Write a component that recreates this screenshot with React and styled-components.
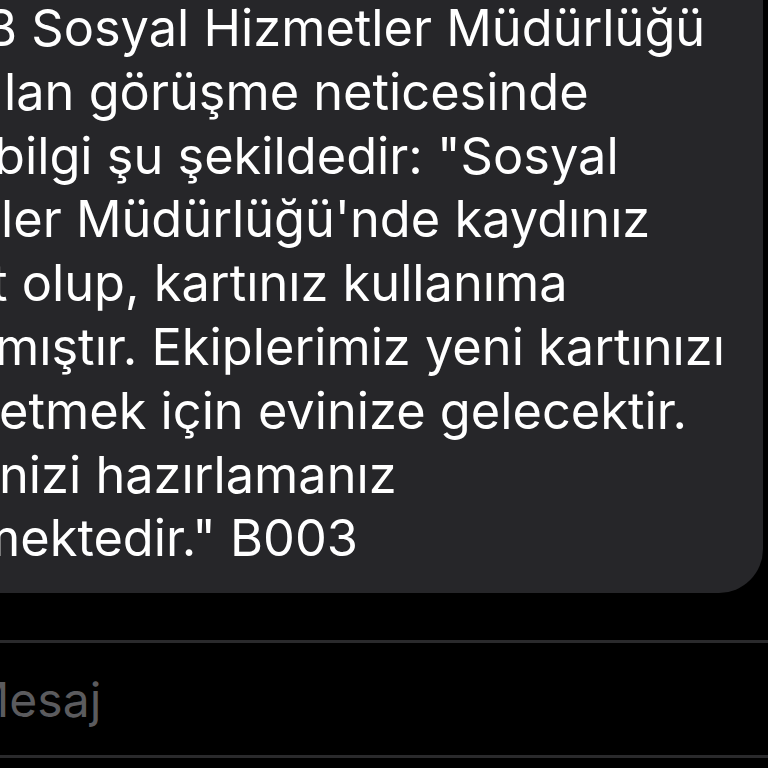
import React from "react";
import styled, { createGlobalStyle } from "styled-components";

const GlobalStyle = createGlobalStyle`
  html, body {
    margin: 0;
    padding: 0;
    background: #000;
    overflow: hidden;
  }
  #root {
    width: 768px;
    height: 768px;
    overflow: hidden;
  }
`;

const Screen = styled.div`
  width: 768px;
  height: 768px;
  display: flex;
  flex-direction: column;
  background: #000;
  font-family: Inter, "Noto Sans", sans-serif;
  overflow: hidden;
`;

const Bubble = styled.div`
  width: 763px;
  height: 593px;
  box-sizing: border-box;
  background: #262629;
  border-radius: 0 0 44px 0;
  display: flex;
  flex-direction: column;
  overflow: hidden;
  flex-shrink: 0;
`;

const Lines = styled.div`
  margin-top: -4px;
`;

const Line = styled.div`
  color: #fff;
  font-size: 50.5px;
  line-height: 63.8px;
  white-space: nowrap;
  margin-left: ${(p) => p.$x}px;
`;

const Composer = styled.div`
  margin-top: 47px;
  height: 112px;
  border-top: 3px solid #2a2a2c;
  border-bottom: 3px solid #2a2a2c;
  display: flex;
  align-items: center;
  flex-shrink: 0;
`;

const Placeholder = styled.div`
  color: #5b5b5e;
  font-size: 48px;
  margin-left: ${(p) => p.$x}px;
  white-space: nowrap;
`;

const lines = [
  { x: -16, text: "B Sosyal Hizmetler Müdürlüğü" },
  { x: 4, text: "lan görüşme neticesinde" },
  { x: -6, text: "bilgi şu şekildedir: \"Sosyal" },
  { x: 1, text: "ler Müdürlüğü'nde kaydınız" },
  { x: -9, text: "t olup, kartınız kullanıma" },
  { x: -5, text: "mıştır. Ekiplerimiz yeni kartınızı" },
  { x: -1, text: "etmek için evinize gelecektir." },
  { x: -1, text: "nizi hazırlamanız" },
  { x: -24, text: "mektedir.\" B003" },
];

export default function App() {
  return (
    <>
      <GlobalStyle />
      <Screen>
        <Bubble>
          <Lines>
            {lines.map((l, i) => (
              <Line key={i} $x={l.x}>
                {l.text}
              </Line>
            ))}
          </Lines>
        </Bubble>
        <Composer>
          <Placeholder $x={-34}>Mesaj</Placeholder>
        </Composer>
      </Screen>
    </>
  );
}
